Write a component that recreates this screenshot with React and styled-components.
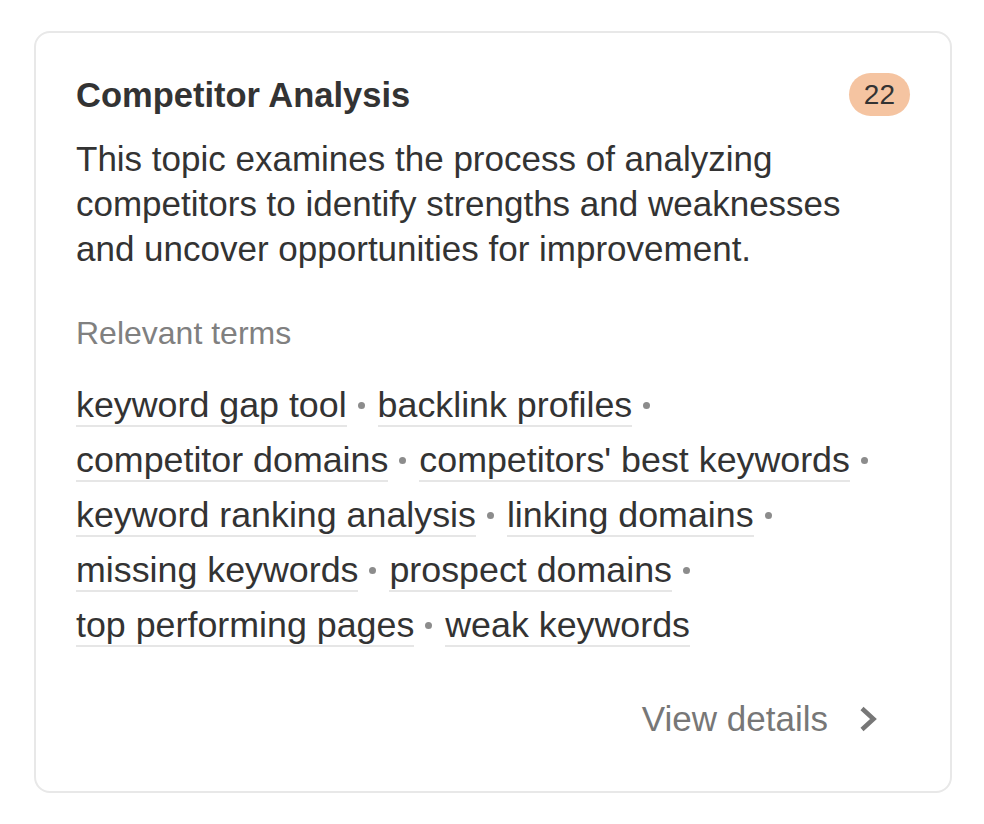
import React from 'react';
import styled, { createGlobalStyle } from 'styled-components';

const GlobalStyle = createGlobalStyle`
  body {
    margin: 0;
    background: #ffffff;
    font-family: 'Liberation Sans', Arial, sans-serif;
  }
`;

const Page = styled.div`
  padding: 31px 32px 31px 34px;
`;

const Card = styled.div`
  border: 2px solid #e8e8e8;
  border-radius: 16px;
  padding: 40px 40px 52px 40px;
  background: #fff;
`;

const Header = styled.div`
  display: flex;
  align-items: center;
  justify-content: space-between;
`;

const Title = styled.h2`
  margin: 0;
  font-size: 34.5px;
  line-height: 40px;
  font-weight: bold;
  color: #333;
`;

const Badge = styled.span`
  background: #f5c4a1;
  color: #333;
  font-size: 28px;
  line-height: 33px;
  border-radius: 22px;
  padding: 5px 15px;
`;

const Description = styled.p`
  margin: 20px 0 0;
  max-width: 790px;
  font-size: 35px;
  line-height: 45px;
  color: #333;
`;

const Label = styled.div`
  margin-top: 44px;
  font-size: 32px;
  line-height: 37px;
  color: #808080;
`;

const Terms = styled.div`
  margin-top: 26px;
  font-size: 35.8px;
  line-height: 55px;
  color: #333;
`;

const Item = styled.span`
  white-space: nowrap;
`;

const Term = styled.a`
  color: #333;
  text-decoration: none;
  border-bottom: 2px solid #e6e6e6;
`;

const Dot = styled.span`
  display: inline-block;
  width: 7px;
  height: 7px;
  border-radius: 50%;
  background: #8c8c8c;
  margin: 0 3px 0 11px;
  vertical-align: 8.5px;
`;

const Footer = styled.div`
  display: flex;
  justify-content: flex-end;
  margin-top: 46px;
  padding-right: 33px;
`;

const DetailsLink = styled.a`
  display: flex;
  align-items: center;
  gap: 31px;
  color: #777;
  font-size: 35px;
  line-height: 40px;
  text-decoration: none;
`;

const terms = [
  'keyword gap tool',
  'backlink profiles',
  'competitor domains',
  "competitors' best keywords",
  'keyword ranking analysis',
  'linking domains',
  'missing keywords',
  'prospect domains',
  'top performing pages',
  'weak keywords',
];

function App() {
  return (
    <>
      <GlobalStyle />
      <Page>
        <Card>
          <Header>
            <Title>Competitor Analysis</Title>
            <Badge>22</Badge>
          </Header>
          <Description>
            This topic examines the process of analyzing competitors to identify strengths and
            weaknesses and uncover opportunities for improvement.
          </Description>
          <Label>Relevant terms</Label>
          <Terms>
            {terms.map((t, i) => (
              <React.Fragment key={t}>
                <Item>
                  <Term href="#">{t}</Term>
                  {i < terms.length - 1 && <Dot />}
                </Item>{' '}
              </React.Fragment>
            ))}
          </Terms>
          <Footer>
            <DetailsLink href="#">
              View details
              <svg width="18" height="26" viewBox="0 0 18 26">
                <path d="M3 2.5 L14.5 13 L3 23.5" fill="none" stroke="#777" strokeWidth="4.5" />
              </svg>
            </DetailsLink>
          </Footer>
        </Card>
      </Page>
    </>
  );
}

export default App;
